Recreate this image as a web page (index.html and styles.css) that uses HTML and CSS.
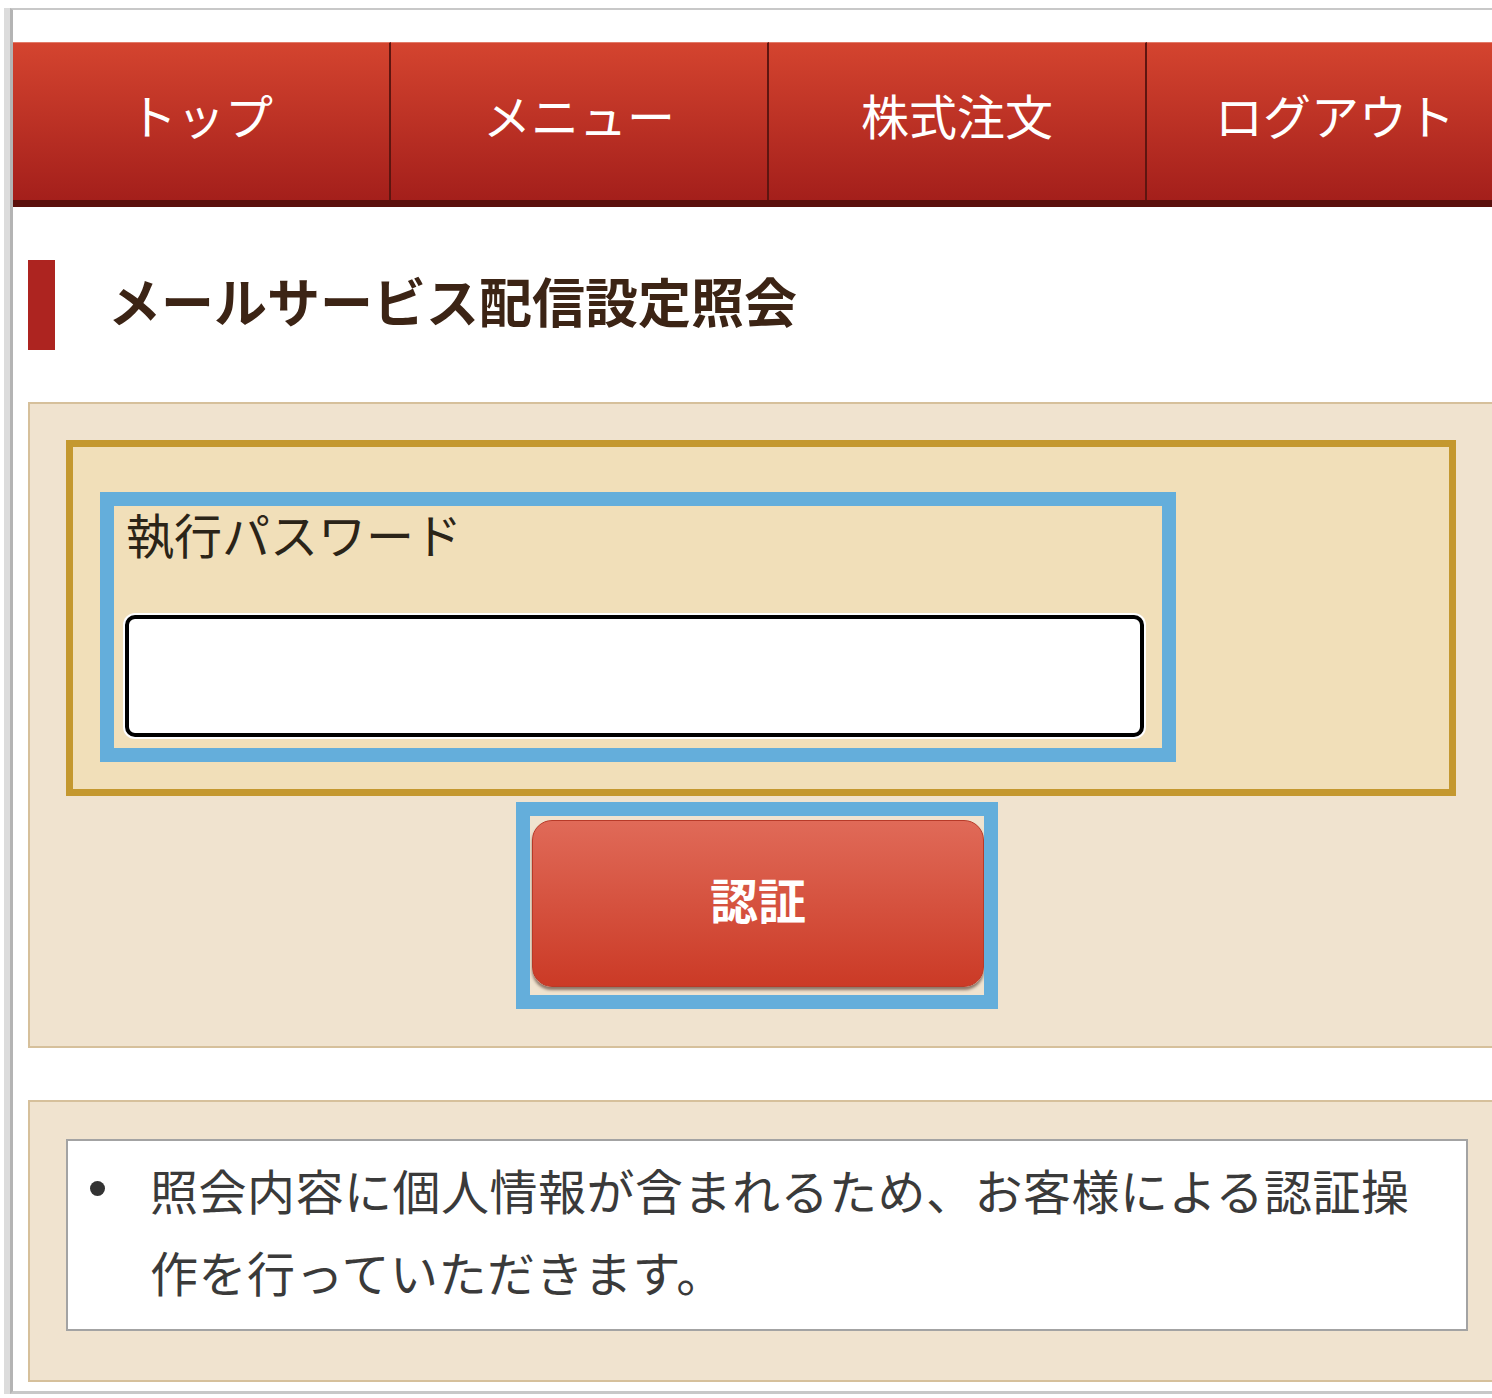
FILE: index.html
```html
<!DOCTYPE html>
<html lang="ja">
<head>
  <meta charset="UTF-8" />
  <title>メールサービス配信設定照会</title>
  <meta name="viewport" content="width=device-width, initial-scale=1.0" />
  <link rel="stylesheet" href="styles.css">
</head>
<body>

  <div class="frame">
    <!-- Global menu -->
    <div class="nav">
      <a class="nav-item" href="#">トップ</a>
      <a class="nav-item" href="#">メニュー</a>
      <a class="nav-item" href="#">株式注文</a>
      <a class="nav-item" href="#">ログアウト</a>
    </div>

    <h1 class="page-title">メールサービス配信設定照会</h1>

    <!-- Password form -->
    <div class="panel">
      <div class="field-box">
        <div class="field-group mark">
          <label class="field-label" for="password">執行パスワード</label>
          <input class="field-input" type="password" id="password">
        </div>
      </div>
      <div class="button-wrap mark">
        <button class="auth-button" type="button">認証</button>
      </div>
    </div>

    <!-- Notes -->
    <div class="panel panel-notes">
      <div class="note-box">
        <div class="note-item">
          <span class="bullet"></span>
          <span class="note-text">照会内容に個人情報が含まれるため、お客様による認証操作を行っていただきます。</span>
        </div>
      </div>
    </div>
  </div>

</body>
</html>
```

FILE: styles.css
```css
html, body {
  margin: 0;
  overflow: hidden;
  background: #fff;
  font-family: "Noto Sans CJK JP", "Noto Sans", sans-serif;
}
.frame {
  margin: 8px 0 0 10px;
  width: 1520px;
  border-top: 2px solid #c8c8c8;
  border-left: 3px solid #b4b4b4;
  border-bottom: 3px solid #c8c8c8;
  box-shadow: -6px 0 0 #dcdcdc;
  padding: 32px 0 9px 0;
}

/* menu bar */
.nav {
  display: flex;
  border-bottom: 7px solid #5b100c;
}
.nav-item {
  flex: 0 0 376px;
  height: 157px;
  line-height: 143px;
  text-align: center;
  color: #fff;
  font-size: 48px;
  text-decoration: none;
  background: linear-gradient(#d4442f, #a41f1b);
  border-top: 1px solid #e27a68;
  border-right: 2px solid #5e1510;
}

/* heading */
.page-title {
  margin: 53px 0 0 15px;
  height: 90px;
  line-height: 80px;
  border-left: 27px solid #ad2420;
  padding-left: 53px;
  font-size: 53px;
  font-weight: bold;
  color: #3c2415;
}

/* beige panels */
.panel {
  margin: 52px 0 0 15px;
  width: 1466px;
  box-sizing: border-box;
  border: 2px solid #d6c09b;
  background: #f0e3cf;
  padding: 36px 36px 51px;
}
.field-box {
  border: 7px solid #c4982f;
  background: #f1dfb9;
  padding: 59px 41px 41px;
}
.mark {
  outline: 14px solid #64aedb; /* highlight frame */
}
.field-group {
  width: 1048px;
  box-sizing: border-box;
  padding: 0 18px 11px 11px;
}
.field-label {
  display: block;
  height: 60px;
  line-height: 54px;
  padding-left: 1px;
  margin-bottom: 49px;
  font-size: 48px;
  color: #2b2418;
}
.field-input {
  display: block;
  width: 1019px;
  height: 122px;
  box-sizing: border-box;
  border: 4px solid #000;
  border-radius: 10px;
  box-shadow: 0 0 0 2px #fff;
  background: #fff;
}
.button-wrap {
  margin: 20px 0 0 464px;
  width: 454px;
  box-sizing: border-box;
  padding: 4px 0 8px 2px;
}
.auth-button {
  display: block;
  width: 452px;
  height: 167px;
  padding: 0 0 12px;
  border: 1px solid #b83a28;
  border-radius: 20px;
  background: linear-gradient(#e06a58, #cb3a26);
  box-shadow: 0 3px 3px rgba(60, 30, 20, 0.55);
  color: #fff;
  font-family: "Noto Sans CJK JP", sans-serif;
  font-size: 48px;
  font-weight: bold;
}

/* notes */
.panel-notes {
  padding: 37px 24px 49px 36px;
}
.note-box {
  border: 2px solid #a3a3a3;
  background: #fff;
  padding: 7px 24px 17px 0;
}
.note-item {
  display: flex;
  font-size: 48px;
  line-height: 82px;
  letter-spacing: 0.5px;
  color: #3a3a3a;
}
.bullet {
  flex: none;
  width: 82px;
}
.bullet::before {
  content: "";
  display: block;
  width: 15px;
  height: 15px;
  border-radius: 50%;
  background: #333;
  margin: 33px 0 0 22px;
}
```
